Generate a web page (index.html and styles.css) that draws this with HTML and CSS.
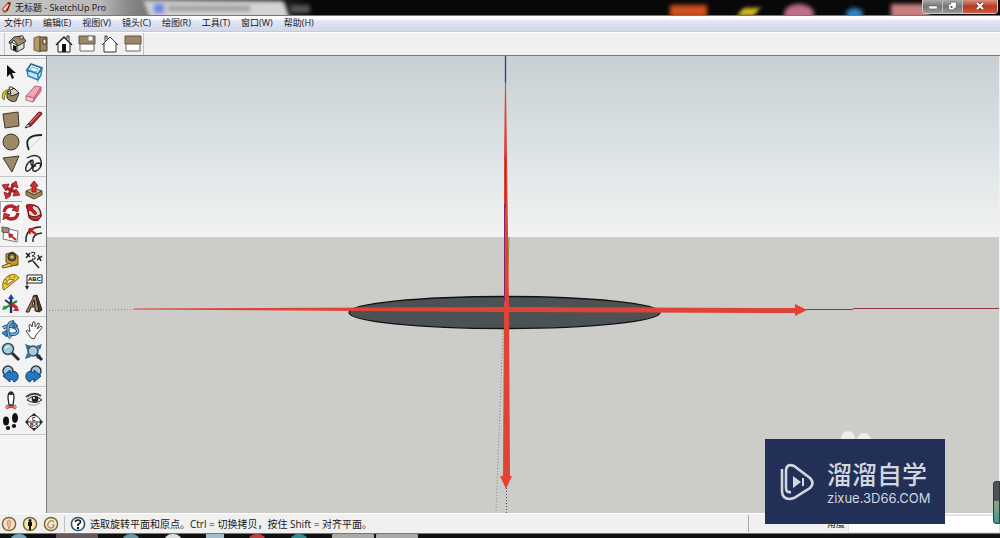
FILE: index.html
```html
<!DOCTYPE html>
<html lang="zh-CN">
<head>
<meta charset="utf-8">
<title>无标题 - SketchUp Pro</title>
<link rel="stylesheet" href="styles.css">
</head>
<body>
<div class="app">
  <header class="titlebar">
    <div class="backdrop" aria-hidden="true">
      <span class="blob tab"></span><span class="blob tab-icon"></span><span class="blob tab-text"></span><span class="blob newtab"></span>
      <span class="blob orange"></span><span class="blob yellow"></span><span class="blob pink"></span><span class="blob blue"></span><span class="blob rose"></span>
    </div>
    <svg class="logo" viewBox="0 0 14 15"><path d="M2 9 8 2q3-1 3 1L8 11l-4 2z" fill="#a8431f"/><path d="M3 9 8 4l1 1-4 6z" fill="#f5d8c5"/><path d="M8 3 10 4 7 11" fill="none" stroke="#6b1d0c"/></svg>
    <h1 class="title">无标题 - SketchUp Pro</h1>
    <div class="window-buttons">
      <button class="win" aria-label="最小化"><svg viewBox="0 0 20 13"><path d="M6 6h9v3H6z" fill="#fff" stroke="#555" stroke-width=".6"/></svg></button>
      <button class="win" aria-label="还原"><svg viewBox="0 0 20 13"><path d="M8 2h6v6h-2v2H6V4h2z" fill="#fff" stroke="#555" stroke-width=".6"/><path d="M8 6h2v2H8z" fill="#555"/></svg></button>
      <button class="win close" aria-label="关闭"><svg viewBox="0 0 34 13"><path d="m14 3 6 6m0-6-6 6" stroke="#633" stroke-width="3.4"/><path d="m14 3 6 6m0-6-6 6" stroke="#fff" stroke-width="2"/></svg></button>
    </div>
  </header>

  <nav class="menu">
    <a href="#">文件(F)</a><a href="#">编辑(E)</a><a href="#">视图(V)</a><a href="#">镜头(C)</a><a href="#">绘图(R)</a><a href="#">工具(T)</a><a href="#">窗口(W)</a><a href="#">帮助(H)</a>
  </nav>

  <div class="toolbar">
    <div class="views">
      <button aria-label="等轴"><svg viewBox="0 0 22 22"><path d="M4 9v7l6 3V12z" fill="#fff" stroke="#333"/><path d="m10 19 7-4V8l-7 4z" fill="#ddd" stroke="#333"/><path d="M2 9 7 4l8-1 4 5-8 5-4-6-4 4z" fill="#a08a68" stroke="#333"/><path d="m6 12 3 1v5l-3-1z" fill="#111"/><path d="M13 3h3v3h-3z" fill="#fff" stroke="#333"/></svg></button>
      <button aria-label="俯视图"><svg viewBox="0 0 22 22"><path d="m4 5 6-2v16l-6-2z" fill="#b99868" stroke="#776040"/><path d="M10 4h7v14h-7z" fill="#a38459" stroke="#4d4234"/><path d="M13 6h3v5h-3z" fill="#fff" stroke="#333"/></svg></button>
      <button aria-label="前视图"><svg viewBox="0 0 22 22"><path d="M5 10v9h12v-9l-6-6z" fill="#fff" stroke="#222"/><path d="m3 12 8-8 8 8" fill="none" stroke="#222" stroke-width="1.5"/><path d="M9 11h4v8H9z" fill="#111"/><path d="M14 6V3h2v5" fill="#fff" stroke="#222"/></svg></button>
      <button aria-label="右视图"><svg viewBox="0 0 22 22"><path d="M4 10h14v8H4z" fill="#fff" stroke="#666"/><path d="M3 3h16v8H3z" fill="#9c8768" stroke="#655741"/><path d="M12 3h5v5h-5z" fill="#fff" stroke="#777"/></svg></button>
      <button aria-label="后视图"><svg viewBox="0 0 22 22"><path d="M5 10v9h12v-9l-6-6z" fill="#fff" stroke="#333"/><path d="m3 12 8-8 8 8M6 8V3h2v3" fill="none" stroke="#333"/></svg></button>
      <button aria-label="左视图"><svg viewBox="0 0 22 22"><path d="M4 10h14v8H4z" fill="#fff" stroke="#666"/><path d="M3 3h16v8H3z" fill="#9c8768" stroke="#655741"/></svg></button>
    </div>
  </div>

  <div class="workspace">
    <aside class="tools">
      <div class="group">
        <button aria-label="选择"><svg viewBox="0 0 22 22"><path d="M7 4v12l3-3 2 5 2-1-2-5h4z" fill="#111"/></svg></button>
        <button aria-label="制作组件"><svg viewBox="0 0 22 22"><path d="m8 3 11 4-4 6-11-4z" fill="#eef8fd" stroke="#1d6797" stroke-width="1.6"/><path d="m4 9 11 4v6L5 15zM15 13l4-6-1 7-3 5z" fill="#c5e3f3" stroke="#2a7fb3" stroke-width="1.4"/><path d="m9 6 6 2-2 3-6-2z" fill="#fff" stroke="#63a9ce"/></svg></button>
        <button aria-label="颜料桶"><svg viewBox="0 0 22 22"><path d="m7 10 7-5 5 5-3 8q-5 2-9-3z" fill="#96835d" stroke="#333"/><path d="m7 9 7-4 5 5-7 3z" fill="#d8cfb8" stroke="#222"/><path d="M14 6Q10 2 9 5l2 6" fill="none" stroke="#222"/><path d="M11 7Q5 6 4 17q-3-2-1-7 2-4 8-3z" fill="#e8d523" stroke="#756a13"/></svg></button>
        <button aria-label="擦除"><svg viewBox="0 0 22 22"><path d="m3 13 9-10 6 1-7 11z" fill="#f0a6b4" stroke="#b36476"/><path d="M3 13v4l7 2 1-4z" fill="#f8c9d0" stroke="#b36476"/><path d="m10 19 8-11V4l-7 11z" fill="#da7d91" stroke="#b36476"/></svg></button>
      </div>
      <div class="group">
        <button aria-label="矩形"><svg viewBox="0 0 22 22"><path d="m3 5 15-2 1 14-14 2z" fill="#9d8868" stroke="#3f3729"/></svg></button>
        <button aria-label="线条"><svg viewBox="0 0 22 22"><path d="m5 15 11-12q3 0 3 2L8 17z" fill="#b22732" stroke="#711920"/><path d="m5 15-3 4 6-2z" fill="#edd3a9" stroke="#333"/><path d="m7 14 10-10" stroke="#ee7d80"/></svg></button>
        <button aria-label="圆"><svg viewBox="0 0 22 22"><circle cx="11" cy="11" r="8" fill="#9d8868" stroke="#3f3729"/></svg></button>
        <button aria-label="圆弧"><svg viewBox="0 0 22 22"><path d="M6 19Q-1 4 19 4" fill="none" stroke="#222" stroke-width="1.8"/><path d="m6 18 12-12" stroke="#ccc"/></svg></button>
        <button aria-label="多边形"><svg viewBox="0 0 22 22"><path d="m3 5 16-2-7 16z" fill="#9d8868" stroke="#3f3729"/></svg></button>
        <button aria-label="徒手画"><svg viewBox="0 0 22 22"><path d="M4 5Q13 0 17 5q4 9-4 13-4 1-3-3t5-5q4 0 2 4M10 7q-5 1-7 7-1 5 2 4 5-3 5-8 1-3-2-2-1 6 5 5" fill="none" stroke="#222" stroke-width="1.4"/></svg></button>
      </div>
      <div class="group">
        <button aria-label="移动"><svg viewBox="0 0 22 22"><path d="M14 4 8 18M4 8l14 6" stroke="#a51f27" stroke-width="3"/><path d="m16 2 2 7-7-3zM6 20l-2-7 7 3zM2 6l7-1-3 7zm18 10-7 1 3-7z" fill="#d62f32" stroke="#83171e" stroke-width=".8"/></svg></button>
        <button aria-label="推拉"><svg viewBox="0 0 22 22"><path d="m3 12 8-3 8 3-8 4z" fill="#c9b58f" stroke="#57482f"/><path d="M3 12v4l8 4 8-4v-4l-8 4z" fill="#9c8460" stroke="#57482f"/><path d="M9 13V7H7l4-5 4 5h-2v6z" fill="#d62f32" stroke="#861d22"/></svg></button>
        <button class="active" aria-label="旋转"><svg viewBox="0 0 22 22"><path d="M4 11q1-6 7-6 3 0 5 3" fill="none" stroke="#b9222b" stroke-width="3.4"/><path d="m19 4-1 7-6-2z" fill="#d62f32" stroke="#6d1017" stroke-width=".7"/><path d="M18 12q-1 6-7 6-3 0-5-3" fill="none" stroke="#b9222b" stroke-width="3.4"/><path d="m3 19 1-7 6 2z" fill="#d62f32" stroke="#6d1017" stroke-width=".7"/></svg></button>
        <button aria-label="路径跟随"><svg viewBox="0 0 22 22"><path d="M4 4q13-2 14 10l-3 5q-6 1-9-3z" fill="#e5d8c5" stroke="#701217" stroke-width="1.4"/><path d="M6 14q6 4 12-1v3q-4 5-10 2z" fill="#c3363b" stroke="#701217"/><path d="m3 5 7 0-1 2 5 5-2 2-5-5-2 2z" fill="#c3202b" stroke="#701217" stroke-width=".7"/></svg></button>
        <button aria-label="拉伸"><svg viewBox="0 0 22 22"><path d="m4 5 14 3-1 11-14-3z" fill="#fff" stroke="#777"/><path d="m2 4 7 1v5l-7-1z" fill="#a38d6a" stroke="#555"/><path d="m16 17-7-6m0 0 4 1m-4-1 1 4" stroke="#c3202b" stroke-width="1.8"/></svg></button>
        <button aria-label="偏移"><svg viewBox="0 0 22 22"><path d="M3 19Q2 4 18 4" fill="none" stroke="#222" stroke-width="1.6"/><path d="M10 19q-1-8 9-9" fill="none" stroke="#222" stroke-width="1.4"/><path d="m14 12-8-6m0 0h5M6 6l1 5" stroke="#c3202b" stroke-width="2.2"/></svg></button>
      </div>
      <div class="group">
        <button aria-label="卷尺"><svg viewBox="0 0 22 22"><path d="m6 5 7-2 5 4v9l-8 1-4-4z" fill="#c99826" stroke="#5c471b"/><circle cx="12" cy="8" r="4" fill="#5d584a" stroke="#302d24"/><circle cx="12" cy="8" r="1.7" fill="#e7bf45"/><path d="m10 14-8 3 1 2 9-2z" fill="#e9c750" stroke="#675425"/></svg></button>
        <button aria-label="尺寸"><svg viewBox="0 0 22 22"><path d="m3 9 4-5m-4 0 4 4M14 11l5-4m-4-1 3 6M10 12l6 7M5 13l5-2" stroke="#222" stroke-width="1.5"/><path d="M8 4q4-2 4 0 0 2-3 3 4 0 3 3H9" fill="none" stroke="#222"/></svg></button>
        <button aria-label="量角器"><svg viewBox="0 0 22 22"><path d="M3 18Q1 8 10 4q6-2 9 3L4 19z" fill="#efc83e" stroke="#886a13"/><path d="M7 14Q6 9 11 8l3 1z" fill="#f4f0df" stroke="#886a13"/><path d="m4 13 2-1m-1-4 2 2m2-5 1 2m5-2-1 2" stroke="#886a13"/></svg></button>
        <button aria-label="文本"><svg viewBox="0 0 22 22"><path d="M4 4h15v8H4z" fill="#fff" stroke="#222"/><path d="M4 11v6" stroke="#222"/><path d="M2 15h4l-2 4z" fill="#222"/><text x="5" y="10" class="abc">ABC</text></svg></button>
        <button aria-label="轴"><svg viewBox="0 0 22 22"><path d="M11 20V6" stroke="#222d60" stroke-width="2.4"/><path d="m8 6 3-5 3 5z" fill="#1b3cc0"/><path d="m5 15 12-7" stroke="#258c32" stroke-width="2.2"/><path d="m2 17 2-5 3 4z" fill="#25913a"/><path d="m5 7 11 8" stroke="#333" stroke-width="2"/><path d="m12 11 5 4" stroke="#cb252e" stroke-width="3"/><path d="m19 18-6 0 4-5z" fill="#cb252e"/></svg></button>
        <button aria-label="三维文本"><svg viewBox="0 0 22 22"><path d="m10 3 4-1 5 15-3 2-3-1z" fill="#4a3d28" stroke="#292217"/><path d="m3 19 8-16h2l3 15h-4v-4H8l-2 5zm6-7h3l-1-5z" fill="#9a8560" stroke="#292217"/></svg></button>
      </div>
      <div class="group">
        <button aria-label="环绕观察"><svg viewBox="0 0 22 22"><path d="M3 9q6-4 13 0 4 4-1 6-5 1-9-1" fill="none" stroke="#22557f" stroke-width="3.4"/><path d="M3 9q6-4 13 0 4 4-1 6-5 1-9-1" fill="none" stroke="#8cc0e5" stroke-width="1.4"/><path d="M14 3Q9 2 8 9t3 10" fill="none" stroke="#22557f" stroke-width="3.4"/><path d="M14 3Q9 2 8 9t3 10" fill="none" stroke="#8cc0e5" stroke-width="1.4"/><path d="m13 2 5 5-5 2zM7 11v7l-5-4z" fill="#3b86c4" stroke="#22557f"/></svg></button>
        <button aria-label="平移"><svg viewBox="0 0 22 22"><path d="m8 19-5-7q1-2 4 1L6 6q2-2 3 2l1-5q2-1 2 1v4l3-4q2 0 1 2l-2 4 4-3q2 1 0 3l-5 6-2 4z" fill="#fff" stroke="#444"/></svg></button>
        <button aria-label="缩放"><svg viewBox="0 0 22 22"><path d="m12 12 7 7" stroke="#252d32" stroke-width="3"/><circle cx="8" cy="8" r="5.5" fill="#a5c9de" stroke="#344e5d" stroke-width="1.5"/><path d="M5 8q1-3 4-3" stroke="#fff" fill="none"/></svg></button>
        <button aria-label="充满视窗"><svg viewBox="0 0 22 22"><path d="m2 3 6 2-4 4zm17 0-6 2 4 4zM2 18l6-2-4-4zm17 1-2-6-4 4z" fill="#2672ae"/><path d="m13 13 6 6" stroke="#252d32" stroke-width="3"/><circle cx="10" cy="10" r="5" fill="#a5c9de" stroke="#344e5d" stroke-width="1.5"/></svg></button>
        <button aria-label="上一视图"><svg viewBox="0 0 22 22"><circle cx="8" cy="8" r="5" fill="#a5c9de" stroke="#293e4a" stroke-width="1.5"/><path d="m3 13 7-6v3q6-4 8 2 1 5-4 7-1-3-4-3v3z" fill="#2578c6" stroke="#183f6b"/></svg></button>
        <button aria-label="下一视图"><svg viewBox="0 0 22 22"><circle cx="13" cy="8" r="5" fill="#a5c9de" stroke="#293e4a" stroke-width="1.5"/><path d="m18 13-7-6v3Q5 6 3 12q-1 5 4 7 1-3 4-3v3z" fill="#2578c6" stroke="#183f6b"/></svg></button>
      </div>
      <div class="group">
        <button aria-label="定位相机"><svg viewBox="0 0 22 22"><path d="M9 16 8 9q0-6 3-6t3 6l-1 7z" fill="#fff" stroke="#222" stroke-width="1.300"/><path d="M9 6q2-6 4 0z" fill="#222"/><path d="m6 20 10-4m-10 0 10 4M5 18h12" stroke="#cf3434"/></svg></button>
        <button aria-label="正面观察"><svg viewBox="0 0 22 22"><path d="M4 11q7-7 15 0-7 5-15 0z" fill="#eee" stroke="#222"/><circle cx="12" cy="10" r="3.3" fill="#222"/><circle cx="11" cy="9" r="1" fill="#fff"/><path d="M3 8q8-6 15-1" fill="none" stroke="#444" stroke-width="2"/><path d="M5 15q7 3 12-1" fill="none" stroke="#bbb" stroke-width="1.4"/></svg></button>
        <button aria-label="漫游"><svg viewBox="0 0 22 22"><ellipse cx="6" cy="10" rx="3" ry="4.500" fill="#111"/><ellipse cx="8" cy="17" rx="2.200" ry="2" fill="#111"/><ellipse cx="15" cy="7" rx="3" ry="5" fill="#111"/><ellipse cx="14" cy="15" rx="2.200" ry="2" fill="#111"/></svg></button>
        <button aria-label="剖切面"><svg viewBox="0 0 22 22"><path d="m11 2 9 9-9 9-9-9z" fill="#222"/><circle cx="11" cy="11" r="6.5" fill="#fff" stroke="#222"/><path d="M4 11h14" stroke="#222"/><text x="9" y="10" class="mark">C</text><text x="7" y="16" class="mark">B-5</text></svg></button>
      </div>
    </aside>

    <main class="canvas">
      <svg class="scene" viewBox="47 56 952 457" preserveAspectRatio="none">
        <defs><linearGradient id="sky" x2="0" y2="1"><stop stop-color="#c9d0d4"/><stop offset=".5" stop-color="#dbe2e5"/><stop offset="1" stop-color="#f2f3f2"/></linearGradient></defs>
        <path d="M47 56h952v181H47z" fill="url(#sky)"/>
        <path d="M47 237h952v276H47z" fill="#cccdc8"/>
        <path d="M49 310.500 134 309.500" stroke="#a77f7b" stroke-dasharray="1 2"/>
        <path d="M806 309.500h46l2-1h145" fill="none" stroke="#91343b"/>
        <path d="M509 237 507 297" stroke="#7b963c"/>
        <path d="M503 330 496 513" stroke="#75906d" stroke-dasharray="1 2"/>
        <path d="M506.500 488v25" stroke="#45456b" stroke-dasharray="1 2"/>
        <ellipse cx="504.500" cy="312.500" rx="155.500" ry="16" fill="#4c5254" stroke="#111" stroke-width="1.300"/>
        <path d="M505.500 56v27" stroke="#2a36a5" stroke-width="1.300"/>
        <path d="M505 82h1l1 75 2 150 1 169h-7l1-169v-150z" fill="#df4338"/>
        <path d="M505.500 156v52" stroke="#902d68"/><path d="M504.500 204v97" stroke="#812568"/>
        <path d="m500 476 6 13 6-13z" fill="#e64132"/>
        <path d="M134 308.500 506 307l289 1v5l-290-1-371-2.500z" fill="#df4338"/>
        <path d="m795 304 12 6-12 6z" fill="#e64132"/>
      </svg>
    </main>
  </div>

  <footer class="status">
    <div class="badges">
      <svg viewBox="0 0 16 16"><circle cx="8" cy="8" r="6.600" fill="#f3e5c4" stroke="#80683c" stroke-width="1.500"/><path d="m8 13-2-6q0-3 2-3t2 3z" fill="#efb6a3" stroke="#c98470" stroke-width=".8"/></svg>
      <svg viewBox="0 0 16 16"><circle cx="8" cy="8" r="6.600" fill="#f5e6b4" stroke="#80683c" stroke-width="1.500"/><circle cx="8" cy="4.500" r="1.500" fill="#111"/><path d="M6 6h4v4H9v4H7v-4H6z" fill="#111"/></svg>
      <svg viewBox="0 0 16 16"><circle cx="8" cy="8" r="6.600" fill="#f4e9cb" stroke="#80683c" stroke-width="1.500"/><path d="M11 6Q8 3 6 6q-3 4 1 6 4 0 4-3H9" fill="none" stroke="#a58d67" stroke-width="1.300"/></svg>
    </div>
    <div class="hint">
      <svg viewBox="0 0 16 16"><circle cx="8" cy="8" r="6.600" fill="#fff" stroke="#24506e" stroke-width="1.500"/><path d="M5.500 6q0-2 2.500-2t2.500 2Q10.500 7 8 8.500V10" fill="none" stroke="#111" stroke-width="1.600"/><path d="M7 11h2v2H7z" fill="#111"/></svg>
      <span>选取旋转平面和原点。Ctrl = 切换拷贝，按住 Shift = 对齐平面。</span>
    </div>
    <label class="measure" for="vcb">角度</label>
    <input id="vcb" class="value" type="text">
  </footer>
  <div class="taskbar" aria-hidden="true"><i class="start"></i><i class="task dim"></i><i class="dot cyan"></i><i class="dot white"></i><i class="dot pane"></i><i class="dot red"></i><i class="dot teal"></i><i class="task"></i><i class="task"></i></div>

  <div class="watermark">
    <svg viewBox="0 0 36 38"><path d="M3 6v22q0 8 8 8l4-1 16-10q5-5 0-10L15 3q-7-3-8 4v18q0 5 5 4" fill="none" stroke="#d2d7df" stroke-width="2.600"/><path d="m14 13 8 6-8 6zM23 15h2v8h-2z" fill="#d2d7df"/></svg>
    <div class="brand"><strong>溜溜自学</strong><span>zixue.3D66.COM</span></div>
  </div>
  <span class="bubble first"></span><span class="bubble"></span>
  <span class="gauge"></span>
</div>
</body>
</html>
```
FILE: styles.css
```css
* { box-sizing: border-box; }
body {
  margin: 0;
  font: 9px/14px "Open Sans", "Noto Sans CJK SC", sans-serif;
  color: #161616;
}
button { padding: 0; border: 0; background: none; }
svg { display: block; }

.app {
  position: relative;
  display: flex;
  flex-direction: column;
  height: 100vh;
  overflow: hidden;
  background: #f0f0f0;
}

.titlebar {
  position: relative;
  display: flex;
  align-items: center;
  height: 16px;
  overflow: hidden;
  background: linear-gradient(90deg, #c5c5c5 0, #b8b8b8 100px, #8f8f8f 125px, #777 145px, #080808 310px);
  border-bottom: 1px solid #777;
}
.backdrop { position: absolute; inset: 0; }
.blob { position: absolute; filter: blur(2px); }
.tab { left: 147px; top: 1px; width: 140px; height: 18px; background: #d4d4d4; transform: skewX(20deg); }
.tab-icon { left: 154px; top: 4px; width: 10px; height: 9px; background: #6c82e0; }
.tab-text { left: 168px; top: 6px; width: 82px; height: 5px; background: #999; }
.newtab { left: 290px; top: 5px; width: 20px; height: 8px; background: #555; }
.orange { left: 670px; top: 5px; width: 37px; height: 12px; background: #d3501f; }
.yellow { left: 740px; top: 8px; width: 17px; height: 8px; background: #d8bc23; transform: skewX(-35deg); }
.pink { left: 784px; top: 4px; width: 30px; height: 20px; border-radius: 50%; background: #bd7088; }
.blue { left: 846px; top: 8px; width: 17px; height: 12px; border-radius: 50%; background: #3282c4; }
.rose { left: 891px; top: 4px; width: 38px; height: 14px; background: #ca8080; }
.logo { position: relative; width: 14px; height: 15px; margin-right: 1px; }
.title { position: relative; margin: 0; font-size: 9px; font-weight: 400; }
.window-buttons {
  position: relative;
  display: flex;
  align-self: flex-start;
  margin: 0 2px 0 auto;
  border: 1px solid #ccc;
  border-top: 0;
  border-radius: 0 0 4px 4px;
  overflow: hidden;
}
.win { width: 20px; height: 13px; background: linear-gradient(#aaa, #777 50%, #999); border-right: 1px solid #bbb; }
.win svg { width: 100%; height: 13px; }
.close { width: 34px; background: linear-gradient(#d89080, #b83921 50%, #cf5b40); border-right: 0; }

.menu {
  display: flex;
  gap: 11px;
  height: 16px;
  padding: 0 4px;
  background: linear-gradient(#fff 0, #fff 2px, #e2e7f5 5px, #d5dbef 12px, #d6d9e3 100%);
  border-bottom: 1px solid #c7cad0;
  white-space: nowrap;
}
.menu a { color: inherit; text-decoration: none; }

.toolbar { height: 24px; padding-left: 4px; background: #f0f0f0; border-top: 1px solid #fff; border-bottom: 1px solid #75797b; }
.views { display: flex; gap: 1px; width: 140px; height: 22px; padding-left: 2px; border: 0 solid #c5c5c5; border-width: 0 1px; }
.views button, .views svg { width: 22px; height: 22px; }

.workspace { display: flex; flex: 1; min-height: 0; }
.tools { width: 47px; padding-top: 2px; background: #f3f3f3; border-right: 1px solid #777b7d; overflow: hidden; }
.group {
  display: grid;
  grid-template-columns: 22px 22px;
  column-gap: 1px;
  margin-bottom: 2px;
  padding-bottom: 1px;
  border-bottom: 1px solid #c6c6c6;
}
.group:first-child { padding-top: 2px; border-top: 1px solid #c6c6c6; }
.group button { width: 22px; height: 22px; }
.group .active { background: #fafafa; box-shadow: inset 1px 1px #aaa; }
.abc { font: bold 6px "Liberation Sans", sans-serif; }
.mark { font: bold 5px "Liberation Sans", sans-serif; }
.canvas { flex: 1; min-width: 0; margin-right: 1px; }
.scene { width: 100%; height: 100%; }

.status { display: flex; align-items: center; height: 20px; background: #f0f0f0; border-top: 1px solid #fff; }
.status svg { width: 16px; height: 16px; }
.badges { display: flex; gap: 5px; height: 16px; padding: 0 5px 0 1px; border-right: 1px solid #c0c0c0; }
.hint { display: flex; flex: 1; align-items: center; gap: 4px; padding-left: 5px; font-size: 10px; white-space: nowrap; }
.measure { width: 100px; height: 17px; padding: 2px 3px; border-left: 1px solid #aaa; text-align: right; }
.value { width: 152px; height: 18px; border: 1px solid #ddd; background: #fff; }

.taskbar { display: flex; gap: 24px; height: 5px; padding-left: 10px; overflow: hidden; background: #111; border-top: 1px solid #777; }
.taskbar i { flex: none; width: 18px; height: 8px; border-radius: 9px 9px 0 0; }
.taskbar .start { background: #73a4b5; }
.taskbar .task { width: 42px; border-radius: 1px; background: #aaa; margin-right: -22px; }
.taskbar .dim { background: #65595b; margin-right: 0; margin-left: 4px; }
.taskbar .cyan { background: #6b95a4; }
.taskbar .white { background: #ddd; }
.taskbar .pane { background: #a5bccc; border-radius: 0; }
.taskbar .red { background: #c43e3e; }
.taskbar .teal { background: #308c91; }

.watermark {
  position: absolute;
  right: 55px;
  bottom: 14px;
  z-index: 1;
  display: flex;
  align-items: center;
  gap: 12px;
  width: 180px;
  height: 85px;
  padding-left: 14px;
  background: #223057;
  color: #d2d7df;
}
.watermark svg { flex: none; width: 36px; height: 38px; }
.brand { display: flex; flex-direction: column; gap: 4px; white-space: nowrap; }
.brand strong { font: 500 25px/28px "Noto Sans CJK SC", sans-serif; }
.brand span { font: 13px/14px Inter, sans-serif; }
.bubble { position: absolute; right: 129px; bottom: 91px; width: 14px; height: 14px; border-radius: 50%; background: #ececee; }
.first { right: 145px; bottom: 93px; }
.gauge { position: absolute; right: 0; bottom: 14px; width: 7px; height: 43px; border: 1px solid #33383d; border-radius: 3px 0 0 3px; background: linear-gradient(#4b5359 45%, #91a477 47%, #3d9693); }
```
